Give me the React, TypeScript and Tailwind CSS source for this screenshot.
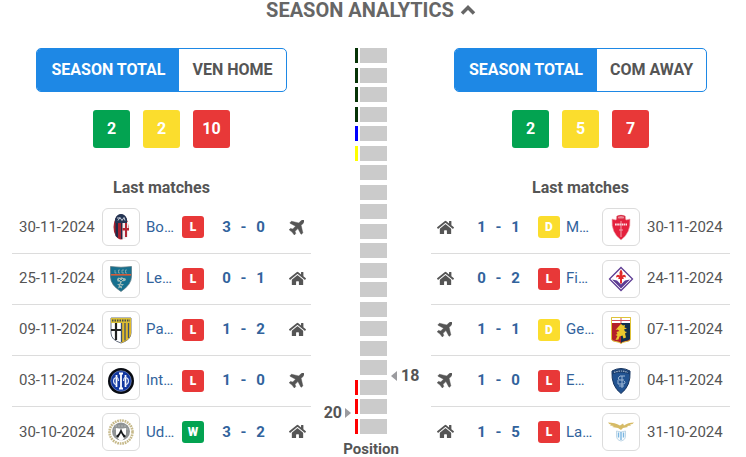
import React from 'react';
import { FaHome } from 'react-icons/fa';
import { clsx } from 'clsx';

type Result = 'W' | 'D' | 'L';

interface Match {
  date: string;
  team: string;
  result: Result;
  score: [number, number];
  venue: 'home' | 'away';
  crest: React.ReactNode;
}

interface TeamPanelProps {
  filter: string;
  totals: [number, number, number];
  matches: Match[];
  mirrored?: boolean;
}

const resultColors: Record<Result, string> = {
  W: 'bg-[#03a351]',
  D: 'bg-[#fbdd2d]',
  L: 'bg-[#e83838]',
};

const Crest = ({ children }: { children: React.ReactNode }) => (
  <svg viewBox="0 0 28 28" className="size-7" aria-hidden="true">{children}</svg>
);

const Bologna = () => (
  <Crest>
    <ellipse cx="14" cy="14" rx="7.5" ry="12.500" fill="#a9212f" />
    <path d="M8.500 7v16l2.500 2V7Z" fill="#1e2b49" />
    <path d="M14 9h1.500v17H14Z" fill="#1e2b49" />
    <path d="M15.500 9h3v17h-3z" fill="#eee" />
    <path d="M18.500 9H21v15l-2.500 1z" fill="#eee" />
    <path d="M18 9h2v15h-2zM15.500 15H22v2.500h-6.500z" fill="#b32735" />
    <path d="M8 6q2-5 6-5t6 5v4H8Z" fill="#243554" />
    <path d="M10 5h3M11 7.500l2-3 2 3 2-3 1 3" fill="none" stroke="#cbd1dc" strokeWidth="1" />
  </Crest>
);

const Lecce = () => (
  <Crest>
    <path d="M3.500 1.500q10.500 1.500 21 0v10q0 8-10.500 15Q3.500 20 3.500 12Z" fill="#16708f" stroke="#54717a" strokeWidth=".7" />
    <path d="M4 9h20v1.600H4Z" fill="#d45b38" />
    <path d="M8 5v3h1.500M13 5h-1.500v3H13M17 5h-2v3h2M20 5h-1.500v3H20" fill="none" stroke="#9bb5b3" strokeWidth=".7" />
    <path d="M10 14.500q1-3 3-1.500 2-1.500 3 0 3-.5 3 2-2 2-4 1l-1 3h3l-2 2v2.500l-2-1-2 1 1-3-2-1 3-1v-2q-3 1-3-2Z" fill="#9fbab7" />
    <path d="m12 14 2 2 2-2M13 20l2 1" fill="none" stroke="#16708f" />
  </Crest>
);

const Parma = () => (
  <Crest>
    <path d="M4 2h20v15q0 7-10 10Q4 24 4 17Z" fill="#fff" stroke="#555e70" strokeWidth=".9" />
    <path d="M4 2h20v5H4Z" fill="#d9bf37" />
    <path d="M5 4.500h18" stroke="#484c4a" strokeWidth="2" strokeDasharray="1.500 1" />
    <path d="M14 7h10v10q0 7-10 10Z" fill="#e1b928" />
    <path d="M14.500 7v19M18 7v17.500M21.500 7v15" stroke="#3d5272" strokeWidth="1.300" />
    <path d="M9 7v17M4 14h10" stroke="#222" strokeWidth="2.200" />
  </Crest>
);

const Inter = () => (
  <Crest>
    <circle cx="14" cy="14" r="13" fill="#080b12" />
    <circle cx="14" cy="14" r="10.300" fill="#1238a0" stroke="#8fa3d8" strokeWidth=".6" />
    <path d="M14 6.500v15M12 6.500h4M12 21.500h4" stroke="#fff" strokeWidth="1.800" />
    <path d="M9.500 8v12M18.500 8v12" stroke="#fff" strokeWidth="1.700" />
    <path d="M9.500 10.500Q6.500 11 6.500 14t3 4M18.500 10.500q3 .5 3 3.500t-3 4M9.500 10q2 1 2 4M18.500 10q-2 1-2 4" fill="none" stroke="#d9e1f4" strokeWidth="1.200" />
  </Crest>
);

const Udinese = () => (
  <Crest>
    <circle cx="14" cy="14" r="11.500" fill="none" stroke="#c6b98a" strokeWidth="2.600" strokeDasharray="1.700 .8" />
    <circle cx="14" cy="13.500" r="9" fill="#8f9394" />
    <path d="M8 8h12M7 11h14" stroke="#b3b6b5" strokeDasharray="2 1" />
    <path d="M9 10q5 1 10 0v6q-1 5-5 7-4-2-5-7Z" fill="#fff" />
    <path d="M9 18q4-3 5-8 1 5 5 8l-2 2-3-5-3 5Z" fill="#16191b" />
  </Crest>
);

const Monza = () => (
  <Crest>
    <path d="m5 6 4 1 1-4q4-2 8 0l1 4 4-1q1 14-9 21Q4 20 5 6Z" fill="#e4213d" stroke="#eca7ae" strokeWidth=".6" />
    <path d="M10 3.500q4-2 8 0L17 6h-6Z" fill="#ee8794" stroke="#d52b43" />
    <path d="M8 11.500h12" stroke="#fbe3e6" strokeWidth="1.800" strokeDasharray="1.700 .5" />
    <path d="M14 8v16M12 17h4" fill="none" stroke="#f3aeb8" strokeWidth=".9" />
  </Crest>
);

const Fiorentina = () => (
  <Crest>
    <path d="M14 2.500 25.500 14 14 25.500 2.500 14Z" fill="#fff" stroke="#5d3b93" strokeWidth="1.300" />
    <path d="m5 14.500 5 1 4 4 4-4 5-1-9 9Z" fill="#5d3b93" />
    <path d="M14 4.500q2.500 3 1 6 4-2 4 2-2-1-3 0l1 1.500h-2v4l-1 1-1-1v-4h-2l1-1.500q-1-1-3 0 0-4 4-2-1.500-3 1-6Z" fill="#e02b2c" />
  </Crest>
);

const Genoa = () => (
  <Crest>
    <path d="M4.500 1.500h19V23q0 2-4 2.500-4 .5-5.500 2-1.500-1.500-5.500-2-4-.5-4-2.500Z" fill="#b41f29" stroke="#dec33a" />
    <path d="M14 7h9v16q-1 1.500-5 2-3 .5-4 2Z" fill="#132f4b" />
    <path d="M5 2h18v5H5Z" fill="#fff" />
    <path d="M5 4.500h18M14 2v5" stroke="#d25059" />
    <path d="m12 10 2-2 2 1.500 2-.5-.5 2.500 2.500 1-3 1 1 2 2 .5-2 1.500 1 4-2.500 1-1-3-3 1-1 3-3 .5 2-4-2-1 2-1-1-2 3-1-2-1.500-2 .5Z" fill="#eac72d" />
  </Crest>
);

const Empoli = () => (
  <Crest>
    <path d="M5 4q9-5 18 0 1 15-9 22.500Q4 19 5 4Z" fill="#225391" stroke="#17345e" />
    <path d="M6 4.500q8-4 16 0V7q-8-3-16 0Z" fill="#183a69" />
    <path d="M7 5.500q7-3 14 0" fill="none" stroke="#9fb4cd" strokeWidth="1.200" strokeDasharray="1.500 .8" />
    <path d="M18 9h-5q-3 2-1 4h5M11 13v4h4M15 9v12M12 19h5M17 14q2 1 0 3h-2" fill="none" stroke="#9fb9d6" strokeWidth="1" />
  </Crest>
);

const Lazio = () => (
  <Crest>
    <path d="M1 4.500q7 0 12 3l3-2 1 2q4-3 10-3-1 2-4 2l1 1-4 .5 1 1-5 1-2 2-3-2-6-1 2-1-4-.5 1-1Q2 6.500 1 4.500Z" fill="#d6bb66" />
    <path d="M9.500 13q4.500 2 9 0v5q0 4-4.500 5-4.500-1-4.500-5Z" fill="#f7fbfd" stroke="#b9d3e4" strokeWidth=".9" />
    <path d="M11.500 14.500v5M14 14v8M16.500 14.500v5" stroke="#7ab6e2" strokeWidth="1.400" />
  </Crest>
);

const PlaneIcon = () => (
  <svg viewBox="0 0 1408 1408" className="size-[15px]" fill="currentColor" stroke="currentColor" strokeWidth="40" aria-hidden="true">
    <path d="M1397 21q44 52 12 148t-108 172l-161 161 160 696q5 19-12 33l-128 96q-7 6-19 6-4 0-7-1-15-3-21-16L834 808l-259 259 53 194q5 17-8 31l-96 96q-9 9-23 9h-2q-15-2-24-13l-189-252L34 943q-11-7-13-23-1-13 9-25l96-97q9-9 23-9 6 0 8 1l194 53 259-259L102 305q-14-8-17-24-2-16 9-27L222 126q14-13 30-8l665 159 160-160q76-76 172-108t148 12z" />
  </svg>
);

const ChevronIcon = () => (
  <svg viewBox="0 0 16 12" className="h-3 w-4" fill="none" stroke="currentColor" strokeWidth="3.5" aria-hidden="true">
    <path d="m2 9.500 6-6 6 6" />
  </svg>
);

const leftMatches: Match[] = [
  { date: '30-11-2024', team: 'Bo…', result: 'L', score: [3, 0], venue: 'away', crest: <Bologna /> },
  { date: '25-11-2024', team: 'Le…', result: 'L', score: [0, 1], venue: 'home', crest: <Lecce /> },
  { date: '09-11-2024', team: 'Pa…', result: 'L', score: [1, 2], venue: 'home', crest: <Parma /> },
  { date: '03-11-2024', team: 'Int…', result: 'L', score: [1, 0], venue: 'away', crest: <Inter /> },
  { date: '30-10-2024', team: 'Ud…', result: 'W', score: [3, 2], venue: 'home', crest: <Udinese /> },
];

const rightMatches: Match[] = [
  { date: '30-11-2024', team: 'M…', result: 'D', score: [1, 1], venue: 'home', crest: <Monza /> },
  { date: '24-11-2024', team: 'Fi…', result: 'L', score: [0, 2], venue: 'home', crest: <Fiorentina /> },
  { date: '07-11-2024', team: 'Ge…', result: 'D', score: [1, 1], venue: 'away', crest: <Genoa /> },
  { date: '04-11-2024', team: 'E…', result: 'L', score: [1, 0], venue: 'away', crest: <Empoli /> },
  { date: '31-10-2024', team: 'La…', result: 'L', score: [1, 5], venue: 'home', crest: <Lazio /> },
];

const MatchRow = ({ match, mirrored }: { match: Match; mirrored?: boolean }) => {
  const cells = [
    <td key="date" className={clsx('p-0 whitespace-nowrap', mirrored ? 'w-[83px]' : 'w-[90px] pl-[7px]')}>{match.date}</td>,
    <td key="crest" className={clsx('p-0', mirrored ? 'w-[45px]' : 'w-11')}>
      <span className="flex size-[38px] items-center justify-center rounded-md border border-[#dcdcdc]">{match.crest}</span>
    </td>,
    <td key="team" className="w-9 p-0 whitespace-nowrap">
      <a href="#" className="text-[#31639c]">{match.team}</a>
    </td>,
    <td key="result" className={clsx('p-0', mirrored ? 'w-7' : 'w-9')}>
      <span className={clsx('flex size-[22px] items-center justify-center rounded-[3px] text-xs font-black text-white', resultColors[match.result])}>
        {match.result}
      </span>
    </td>,
    <td key="score" className={clsx('p-0', mirrored ? 'w-[65px]' : 'w-[71px]')}>
      <a href="#" className="grid w-[51px] grid-cols-3 text-center font-bold text-[#31639c]">
        <span>{match.score[0]}</span>
        <span>-</span>
        <span>{match.score[1]}</span>
      </a>
    </td>,
    <td key="venue" className={clsx('p-0', mirrored ? 'w-[42px] pl-1.5' : 'w-[22px]')}>
      {match.venue === 'home' ? <FaHome size={17} /> : <PlaneIcon />}
    </td>,
  ];

  return (
    <tr className="h-[51px] border-b border-[#dcdcdc] last:border-b-0">
      {mirrored ? [cells[5], cells[4], cells[3], cells[2], cells[1], cells[0]] : cells}
    </tr>
  );
};

const TeamPanel: React.FC<TeamPanelProps> = ({ filter, totals, matches, mirrored }) => (
  <section className="flex flex-1 flex-col items-center">
    <div className="flex h-11 overflow-hidden rounded-[5px] border border-[#1e88e5] text-base font-bold">
      <button className="bg-[#1e88e5] px-3.5 text-white">SEASON TOTAL</button>
      <button className="px-[13px]">{filter}</button>
    </div>
    <div className="mt-[18px] flex gap-[13px] text-base font-bold text-white">
      <span className="flex h-[38px] w-[37px] items-center justify-center rounded-[3px] bg-[#03a351]">{totals[0]}</span>
      <span className="flex h-[38px] w-[37px] items-center justify-center rounded-[3px] bg-[#fbdd2d]">{totals[1]}</span>
      <span className="flex h-[38px] w-[37px] items-center justify-center rounded-[3px] bg-[#e83838]">{totals[2]}</span>
    </div>
    <h3 className="mt-7 mb-0.5 text-base font-bold">Last matches</h3>
    <table className="w-full border-collapse text-[15px]">
      <tbody>
        {matches.map((match) => <MatchRow key={match.date} match={match} mirrored={mirrored} />)}
      </tbody>
    </table>
  </section>
);

const zoneColor = (position: number) => {
  if (position <= 4) return 'bg-[#063306]';
  if (position === 5) return 'bg-[#0000ff]';
  if (position === 6) return 'bg-[#ffff00]';
  if (position >= 18) return 'bg-[#ff0000]';
  return '';
};

const PositionLadder = () => (
  <section className="w-[120px] shrink-0 text-base font-bold">
    <div className="flex">
      <div className="flex flex-1 flex-col items-end justify-end pr-1 pb-[9px]">
        <div className="flex items-center gap-[3px]">
          <span>20</span>
          <span className="border-y-[5px] border-l-[6px] border-y-transparent border-l-[#9b9b9f]" />
        </div>
      </div>
      <ol>
        {Array.from({ length: 20 }).map((_, i) => (
          <li key={i} className="mb-1 flex h-[15px] gap-0.5 odd:mb-[5px] last:mb-0">
            <span className={clsx('w-[3px]', zoneColor(i + 1))} />
            <span className="w-[27px] bg-[#cbcbcb]" />
          </li>
        ))}
      </ol>
      <div className="flex flex-1 flex-col items-start justify-end pb-[46px] pl-1">
        <div className="flex items-center gap-1">
          <span className="border-y-[5px] border-r-[6px] border-y-transparent border-r-[#9b9b9f]" />
          <span>18</span>
        </div>
      </div>
    </div>
    <h3 className="mt-[7px] text-center text-[15px] leading-4">Position</h3>
  </section>
);

export default function App() {
  return (
    <main className="overflow-hidden bg-white pr-4 pl-3 font-[Roboto,sans-serif] text-[#555]">
      <h2 className="mb-7 text-center text-xl leading-5 font-bold text-[#666]">
        <button className="flex w-full items-center justify-center gap-1.5">
          SEASON ANALYTICS
          <ChevronIcon />
        </button>
      </h2>
      <div className="flex items-start">
        <TeamPanel filter="VEN HOME" totals={[2, 2, 10]} matches={leftMatches} />
        <PositionLadder />
        <TeamPanel filter="COM AWAY" totals={[2, 5, 7]} matches={rightMatches} mirrored />
      </div>
    </main>
  );
}
